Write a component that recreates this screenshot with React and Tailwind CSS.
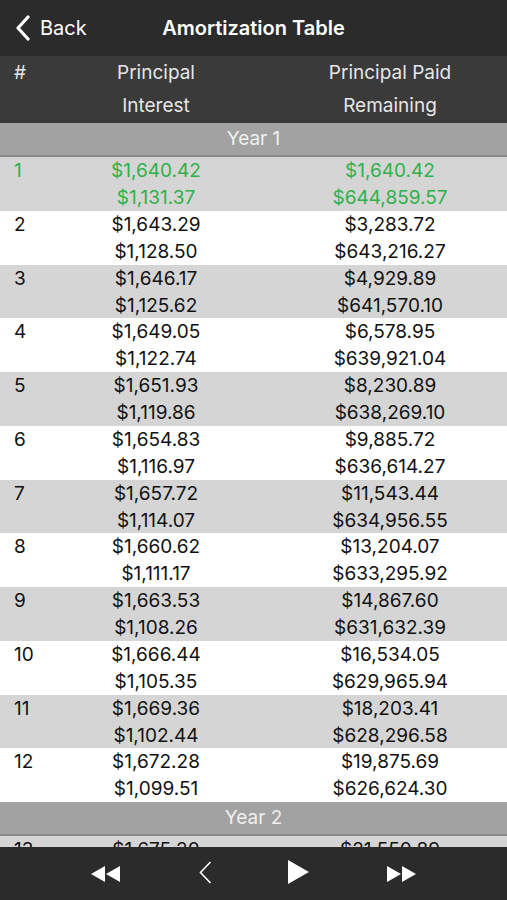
import React from "react";

const rows = [
  ["1", "$1,640.42", "$1,131.37", "$1,640.42", "$644,859.57"],
  ["2", "$1,643.29", "$1,128.50", "$3,283.72", "$643,216.27"],
  ["3", "$1,646.17", "$1,125.62", "$4,929.89", "$641,570.10"],
  ["4", "$1,649.05", "$1,122.74", "$6,578.95", "$639,921.04"],
  ["5", "$1,651.93", "$1,119.86", "$8,230.89", "$638,269.10"],
  ["6", "$1,654.83", "$1,116.97", "$9,885.72", "$636,614.27"],
  ["7", "$1,657.72", "$1,114.07", "$11,543.44", "$634,956.55"],
  ["8", "$1,660.62", "$1,111.17", "$13,204.07", "$633,295.92"],
  ["9", "$1,663.53", "$1,108.26", "$14,867.60", "$631,632.39"],
  ["10", "$1,666.44", "$1,105.35", "$16,534.05", "$629,965.94"],
  ["11", "$1,669.36", "$1,102.44", "$18,203.41", "$628,296.58"],
  ["12", "$1,672.28", "$1,099.51", "$19,875.69", "$626,624.30"],
];

function Row({ r, i }) {
  const gray = i % 2 === 0;
  const green = i === 0;
  return (
    <div
      className={`flex h-[53.75px] shrink-0 ${gray ? "bg-[#d5d5d5]" : "bg-white"} ${
        green ? "text-[#2db24b]" : "text-[#111]"
      } text-[19px] leading-[27px]`}
    >
      <div className="w-[39px] pl-[14px]">{r[0]}</div>
      <div className="w-[234px] flex flex-col items-center">
        <div>{r[1]}</div>
        <div>{r[2]}</div>
      </div>
      <div className="w-[234px] flex flex-col items-center">
        <div>{r[3]}</div>
        <div>{r[4]}</div>
      </div>
    </div>
  );
}

function YearBar({ label }) {
  return (
    <div className="h-[34px] shrink-0 bg-[#a2a2a2] border-b-2 border-[#8a8a8a] flex items-center justify-center text-[#f0f0f0] text-[19px]">
      {label}
    </div>
  );
}

export default function App() {
  return (
    <div
      className="w-[507px] h-[900px] flex flex-col overflow-hidden bg-white"
      style={{ fontFamily: "Inter, 'Noto Sans', sans-serif" }}
    >
      <div className="h-[56px] shrink-0 bg-[#2b2b2b] flex items-center relative">
        <div className="flex items-center pl-[14px] text-white text-[20px]">
          <svg width="18" height="26" viewBox="0 0 18 26" className="mr-[8px]">
            <path d="M14 2 L4 13 L14 24" fill="none" stroke="white" strokeWidth="3.2" strokeLinecap="round" strokeLinejoin="round" />
          </svg>
          <span>Back</span>
        </div>
        <div className="absolute left-0 right-0 top-0 h-full flex items-center justify-center pointer-events-none">
          <span className="text-white text-[20px] font-semibold">Amortization Table</span>
        </div>
      </div>
      <div className="h-[67px] shrink-0 bg-[#3a3a3a] flex text-[#e6e6e6] text-[19px] leading-[33px] pt-[0px]">
        <div className="w-[39px] pl-[14px]">#</div>
        <div className="w-[234px] flex flex-col items-center">
          <div>Principal</div>
          <div>Interest</div>
        </div>
        <div className="w-[234px] flex flex-col items-center">
          <div>Principal Paid</div>
          <div>Remaining</div>
        </div>
      </div>
      <YearBar label="Year 1" />
      {rows.map((r, i) => (
        <Row key={r[0]} r={r} i={i} />
      ))}
      <YearBar label="Year 2" />
      <div className="flex-1 min-h-0 overflow-hidden">
        <Row r={["13", "$1,675.20", "$1,096.59", "$21,550.89", "$624,949.11"]} i={2} />
      </div>
      <div className="h-[53px] shrink-0 bg-[#2b2b2b] relative">
        <div className="absolute left-[91px] top-[19px]">
          <svg width="30" height="16" viewBox="0 0 30 16">
            <path d="M14 0 L0 8 L14 16 Z" fill="white" />
            <path d="M29 0 L15 8 L29 16 Z" fill="white" />
          </svg>
        </div>
        <div className="absolute left-[199px] top-[14px]">
          <svg width="13" height="23" viewBox="0 0 13 23">
            <path d="M11.5 1 L1.5 11.5 L11.5 22" fill="none" stroke="white" strokeWidth="1.6" />
          </svg>
        </div>
        <div className="absolute left-[288px] top-[13px]">
          <svg width="21" height="24" viewBox="0 0 21 24">
            <path d="M0 0 L21 12 L0 24 Z" fill="white" />
          </svg>
        </div>
        <div className="absolute left-[387px] top-[19px]">
          <svg width="30" height="16" viewBox="0 0 30 16">
            <path d="M0 0 L14 8 L0 16 Z" fill="white" />
            <path d="M15 0 L29 8 L15 16 Z" fill="white" />
          </svg>
        </div>
      </div>
    </div>
  );
}
